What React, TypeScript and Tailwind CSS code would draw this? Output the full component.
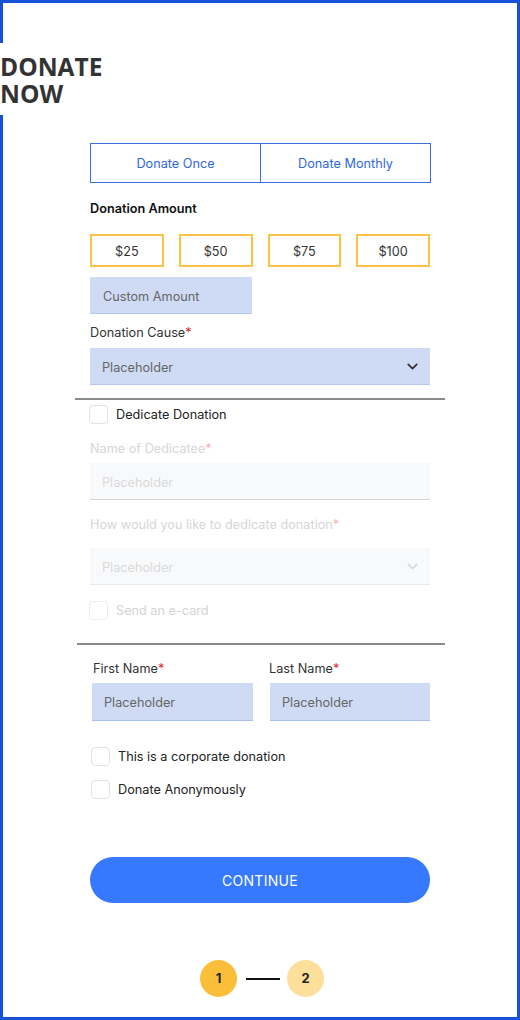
import React from "react";
import { ChevronDown } from "lucide-react";

function Checkbox({ label, disabled, className = "" }: { label: string; disabled?: boolean; className?: string }) {
  return (
    <div className={"flex items-center h-[19px] " + className}>
      <div className={"w-[19px] h-[19px] rounded-[4px] border " + (disabled ? "border-[#ececec]" : "border-[#e2e2e2]")} />
      <span className={"ml-[8px] h-[19px] pt-px text-[12.7px] leading-[18px] " + (disabled ? "text-[#d4d4d4]" : "text-[#222]")}>{label}</span>
    </div>
  );
}

function Label({ text, disabled, className = "" }: { text: string; disabled?: boolean; className?: string }) {
  return (
    <div className={"h-[18px] pt-px text-[12.7px] leading-[18px] " + (disabled ? "text-[#d6d6d6] " : "text-[#333] ") + className}>
      {text}
      <span className={disabled ? "text-[#f7b1b1]" : "text-[#e0242b]"}>*</span>
    </div>
  );
}

export default function App() {
  return (
    <div className="w-[520px] h-[1020px] box-border border-[3px] border-[#1652d6] bg-white font-['Inter',sans-serif]">
      <div className="h-[40px]" />
      <h1 className="-ml-[3px] bg-white pt-[10px] pb-[8px] text-[24.5px] leading-[27px] font-bold text-[#333] font-['Open_Sans',sans-serif]">
        DONATE
        <br />
        NOW
      </h1>

      <div className="ml-[72px] w-[370px]">
        <div className="px-[15px]">
          <div className="mt-[28px] flex h-[40px] w-[341px]">
            <div className="w-[171px] pt-[2px] border border-[#3a6fe0] flex items-center justify-center text-[12.7px] text-[#2f68dc]">
              Donate Once
            </div>
            <div className="flex-1 pt-[2px] -ml-px border border-[#3a6fe0] flex items-center justify-center text-[12.7px] text-[#2f68dc]">
              Donate Monthly
            </div>
          </div>

          <div className="mt-[16px] h-[18px] pt-px text-[12.7px] leading-[18px] font-semibold text-[#111]">Donation Amount</div>

          <div className="mt-[17px] grid grid-cols-4 gap-[15px]">
            {["$25", "$50", "$75", "$100"].map((a) => (
              <div key={a} className="h-[33px] pt-[2px] border-2 border-[#fbc246] flex items-center justify-center text-[12.7px] text-[#333]">
                {a}
              </div>
            ))}
          </div>

          <div className="mt-[10px] w-[162px] h-[37px] pt-[3px] bg-[#cfdbf5] border-b border-[#b4c7ef] flex items-center pl-[13px] text-[12.7px] text-[#666]">
            Custom Amount
          </div>

          <Label text="Donation Cause" className="mt-[9px]" />
          <div className="mt-[7px] h-[37px] bg-[#cfdbf5] border-b border-[#b4c7ef] flex items-center justify-between pl-[12px] pr-[9px] text-[12.7px] text-[#666]">
            <span className="pt-[3px]">Placeholder</span>
            <ChevronDown size={17} strokeWidth={2.5} color="#333" />
          </div>
        </div>

        <div className="mt-[13px] h-[2px] bg-[#8a8a8a]" />

        <div className="px-[15px]">
          <Checkbox label="Dedicate Donation" className="mt-[5px] -ml-px" />

          <Label text="Name of Dedicatee" disabled className="mt-[15px]" />
          <div className="mt-[6px] h-[37px] pt-[3px] bg-[#f8f9fb] border-b border-[#d6d6d6] flex items-center pl-[12px] text-[12.7px] text-[#dadada]">
            Placeholder
          </div>

          <Label text="How would you like to dedicate donation" disabled className="mt-[15px]" />
          <div className="mt-[15px] h-[37px] bg-[#f8f9fb] border-b border-[#eaeaea] flex items-center justify-between pl-[12px] pr-[9px] text-[12.7px] text-[#dadada]">
            <span className="pt-[3px]">Placeholder</span>
            <ChevronDown size={17} strokeWidth={2} color="#d8d8d8" />
          </div>

          <Checkbox label="Send an e-card" disabled className="mt-[16px] -ml-px" />
        </div>

        <div className="mt-[23px] ml-[2px] h-[2px] bg-[#8a8a8a]" />

        <div className="px-[15px]">
          <div className="ml-[2px] mt-[14px] grid grid-cols-2 gap-x-[16px]">
            <div>
              <Label text="First Name" className="ml-px" />
              <div className="mt-[6px] h-[38px] pt-[3px] bg-[#cfdbf5] border-b border-[#a9c0f0] flex items-center pl-[12px] text-[12.7px] text-[#666]">
                Placeholder
              </div>
            </div>
            <div>
              <Label text="Last Name" />
              <div className="mt-[6px] ml-px h-[38px] pt-[3px] bg-[#cfdbf5] border-b border-[#a9c0f0] flex items-center pl-[12px] text-[12.7px] text-[#666]">
                Placeholder
              </div>
            </div>
          </div>

          <Checkbox label="This is a corporate donation" className="mt-[26px] ml-px" />
          <Checkbox label="Donate Anonymously" className="mt-[14px] ml-px" />

          <button className="mt-[58px] w-[340px] h-[46px] pt-px rounded-full bg-[#3679ff] text-white text-[14px] tracking-[0.3px] flex items-center justify-center">
            CONTINUE
          </button>
        </div>
      </div>

      <div className="mt-[57px] flex items-center justify-center">
        <div className="ml-[4px] w-[37px] h-[37px] pt-px rounded-full bg-[#fbbe38] flex items-center justify-center text-[13px] font-bold text-[#222]">
          1
        </div>
        <div className="ml-[9px] mr-[7px] w-[34px] h-[2px] bg-[#111]" />
        <div className="w-[37px] h-[37px] pt-px rounded-full bg-[#fddf9c] flex items-center justify-center text-[13px] font-bold text-[#222]">
          2
        </div>
      </div>
    </div>
  );
}
